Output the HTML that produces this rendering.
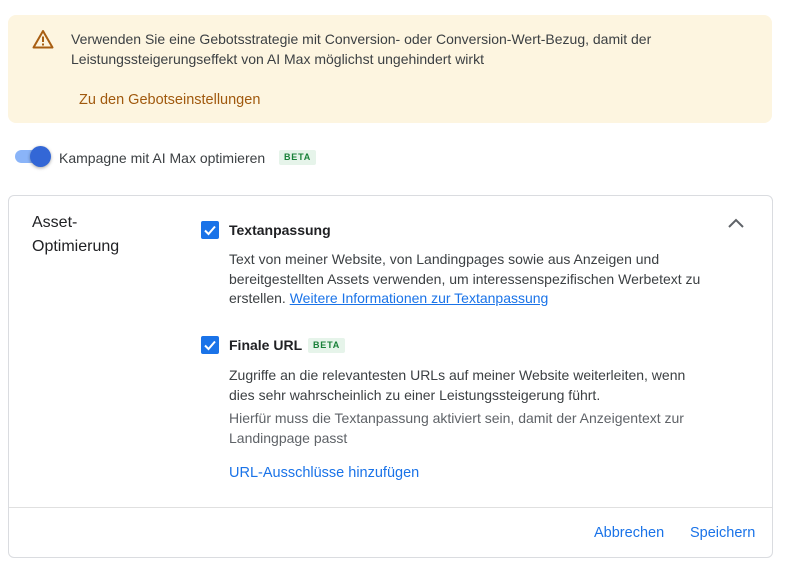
<!DOCTYPE html>
<html><head><meta charset="utf-8"><style>
body{margin:0;width:800px;height:566px;background:#fff;font-family:"Liberation Sans",sans-serif;color:#3c4043;position:relative;overflow:hidden}
.a{position:absolute;white-space:nowrap;line-height:20px}
.banner{position:absolute;left:8px;top:15px;width:764px;height:108px;background:#fdf5e0;border-radius:8px}
.card{position:absolute;left:8px;top:195px;width:765px;height:363px;border:1px solid #dadce0;border-radius:6px;box-sizing:border-box}
.beta{position:absolute;background:#e6f4ea;color:#188038;font-size:9px;font-weight:bold;letter-spacing:.8px;line-height:15px;padding:0 5px;border-radius:2px}
.cb{position:absolute;width:18px;height:18px;background:#1a73e8;border-radius:2px}
.blue{color:#1a73e8}
</style></head><body>
<div class="banner"></div>
<svg class="a" style="left:32px;top:29px" width="22" height="20" viewBox="0 0 22 20"><path d="M11 2 L20.5 18.5 H1.5 Z" fill="none" stroke="#a85e12" stroke-width="2" stroke-linejoin="round"/><rect x="10" y="7.5" width="2" height="5.5" fill="#a85e12"/><rect x="10" y="14.5" width="2" height="2" fill="#a85e12"/></svg>
<div class="a" style="left:71px;top:29px;font-size:14px;color:#3c4043">Verwenden Sie eine Gebotsstrategie mit Conversion- oder Conversion-Wert-Bezug, damit der</div>
<div class="a" style="left:71px;top:49px;font-size:14px;color:#3c4043">Leistungssteigerungseffekt von AI Max möglichst ungehindert wirkt</div>
<div class="a" style="left:79px;top:90px;font-size:14.5px;color:#a0590e">Zu den Gebotseinstellungen</div>
<div class="a" style="left:15px;top:150px;width:35px;height:13px;border-radius:7px;background:#8ab4f8;line-height:13px"></div>
<div class="a" style="left:30px;top:146px;width:21px;height:21px;border-radius:50%;background:#3367d6;box-shadow:0 1px 3px rgba(0,0,0,.35)"></div>
<div class="a" style="left:59px;top:148px;font-size:14px">Kampagne mit AI Max optimieren</div>
<div class="beta" style="left:279px;top:150px">BETA</div>
<div class="card"></div>
<div class="a" style="left:32px;top:211px;font-size:16px;line-height:24px;color:#202124">Asset-<br>Optimierung</div>
<div class="cb" style="left:201px;top:221px"></div>
<svg class="a" style="left:201px;top:221px" width="18" height="18"><path d="M4 9.5 L7.5 13 L14 5.5" stroke="#fff" stroke-width="2" fill="none"/></svg>
<div class="a" style="left:229px;top:220px;font-size:14px;font-weight:bold;color:#202124">Textanpassung</div>
<svg class="a" style="left:727px;top:216px" width="18" height="14"><path d="M2 11 L9 4 L16 11" stroke="#5f6368" stroke-width="2" fill="none"/></svg>
<div class="a" style="left:229px;top:250px;font-size:14px;line-height:19.5px">Text von meiner Website, von Landingpages sowie aus Anzeigen und<br>bereitgestellten Assets verwenden, um interessenspezifischen Werbetext zu<br>erstellen. <span class="blue" style="text-decoration:underline">Weitere Informationen zur Textanpassung</span></div>
<div class="cb" style="left:201px;top:336px"></div>
<svg class="a" style="left:201px;top:336px" width="18" height="18"><path d="M4 9.5 L7.5 13 L14 5.5" stroke="#fff" stroke-width="2" fill="none"/></svg>
<div class="a" style="left:229px;top:335px;font-size:14px;font-weight:bold;color:#202124">Finale URL</div>
<div class="beta" style="left:308px;top:338px">BETA</div>
<div class="a" style="left:229px;top:365px;font-size:14px">Zugriffe an die relevantesten URLs auf meiner Website weiterleiten, wenn<br>dies sehr wahrscheinlich zu einer Leistungssteigerung führt.</div>
<div class="a" style="left:229px;top:408px;font-size:14px;color:#5f6368">Hierfür muss die Textanpassung aktiviert sein, damit der Anzeigentext zur<br>Landingpage passt</div>
<div class="a blue" style="left:229px;top:463px;font-size:14.5px">URL-Ausschlüsse hinzufügen</div>
<div class="a" style="left:9px;top:507px;width:763px;height:1px;background:#e0e0e0"></div>
<div class="a blue" style="left:594px;top:523px;font-size:14.5px">Abbrechen</div>
<div class="a blue" style="left:690px;top:523px;font-size:14.5px">Speichern</div>
</body></html>
